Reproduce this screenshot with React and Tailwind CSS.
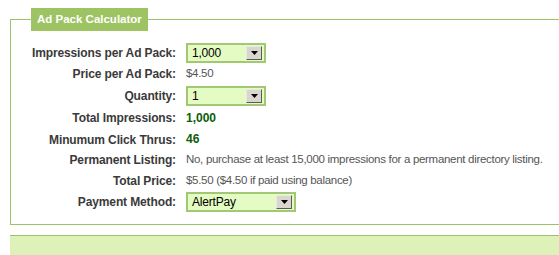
function FakeSelect({ value, width }) {
  return (
    <div
      className={`flex h-[20px] items-center justify-between border-2 border-[#a3c873] bg-[#e4fcc3] pl-[4px] pr-[2px] text-[12px] tracking-[-0.2px] text-black ${width}`}
    >
      <span>{value}</span>
      <span className="flex h-[14px] w-[16px] items-center justify-center border border-t-[#e8e8e8] border-l-[#e8e8e8] border-r-[#5a5a5a] border-b-[#5a5a5a] bg-[#d9d6cf]">
        <svg width="7" height="4" viewBox="0 0 7 4">
          <path d="M0 0h7L3.5 4z" fill="#000" />
        </svg>
      </span>
    </div>
  );
}

const rows = [
  { label: 'Impressions per Ad Pack:', h: 'h-[21px]', value: <FakeSelect value="1,000" width="w-[80px]" /> },
  { label: 'Price per Ad Pack:', h: 'h-[21px]', value: <span className="text-[#555]">$4.50</span> },
  { label: 'Quantity:', h: 'h-[23px]', value: <FakeSelect value="1" width="w-[80px]" /> },
  { label: 'Total Impressions:', h: 'h-[22px]', value: <span className="text-[12px] font-bold tracking-normal text-[#0b5d0b]">1,000</span> },
  { label: 'Minumum Click Thrus:', h: 'h-[21px]', value: <span className="text-[12px] font-bold tracking-normal text-[#0b5d0b]">46</span> },
  {
    label: 'Permanent Listing:',
    h: 'h-[20px]',
    value: <span className="text-[#555]">No, purchase at least 15,000 impressions for a permanent directory listing.</span>,
  },
  { label: 'Total Price:', h: 'h-[21px]', value: <span className="text-[#555]">$5.50 ($4.50 if paid using balance)</span> },
  { label: 'Payment Method:', h: 'h-[22px]', value: <FakeSelect value="AlertPay" width="w-[110px]" /> },
];

export default function App() {
  return (
    <div className="h-[255px] w-[559px] overflow-hidden bg-white text-[12px] font-['Liberation_Sans',Arial,sans-serif]">
      <div className="pl-[10px] pt-[8px]">
        <fieldset className="w-[600px] border border-[#9cc36a] pb-[11px] pt-[11px]">
          <legend className="ml-[20px] flex h-[23px] items-center bg-[#9dc363] px-[6px] text-[11.5px] font-bold text-white">
            Ad Pack Calculator
          </legend>
          {rows.map((r) => (
            <div key={r.label} className={`flex items-center ${r.h}`}>
              <div className="w-[165px] text-right font-bold tracking-[-0.12px] text-[#3a3a3a]">{r.label}</div>
              <div className="pl-[10px] whitespace-nowrap text-[11.5px] tracking-[-0.3px]">{r.value}</div>
            </div>
          ))}
        </fieldset>
        <div className="mt-[10px] h-[30px] w-[600px] border-t border-[#9cc36a] bg-[#dcf2b9]" />
      </div>
    </div>
  );
}
